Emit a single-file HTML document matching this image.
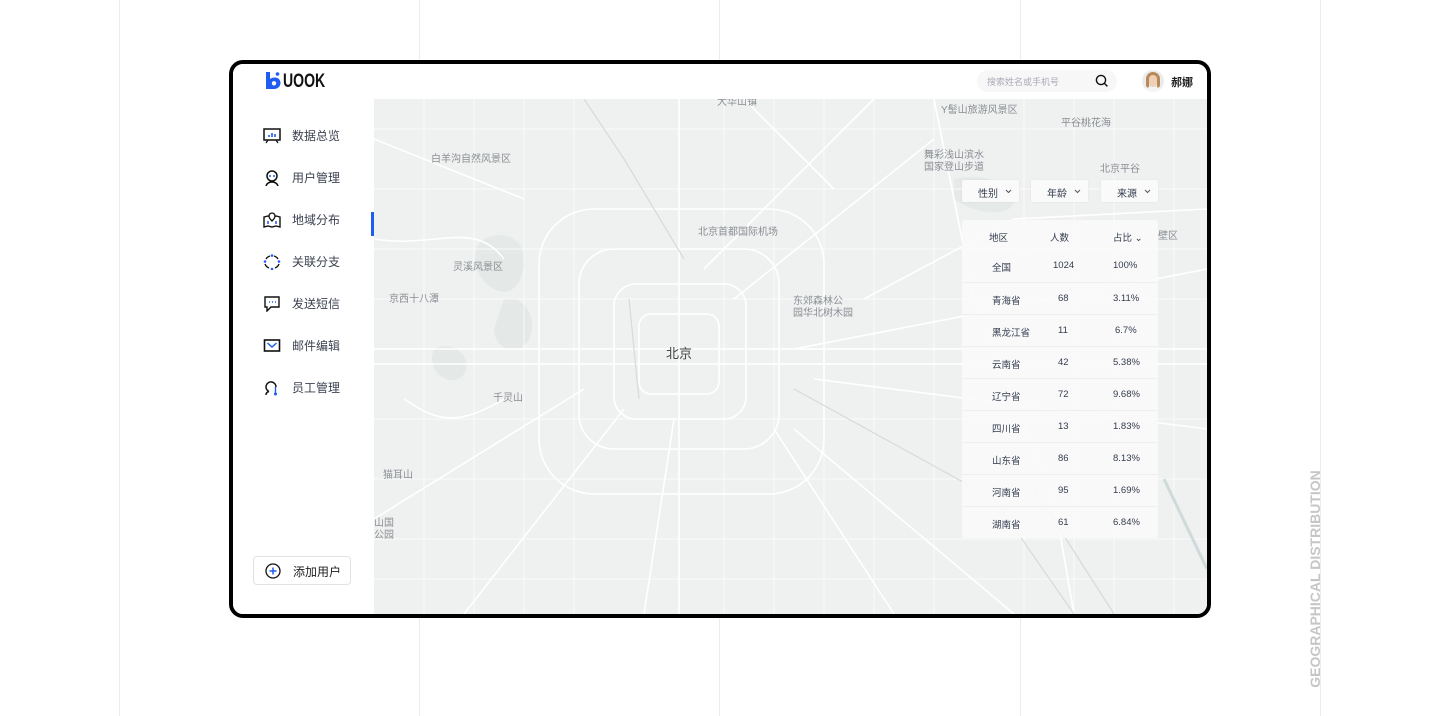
<!DOCTYPE html>
<html><head><meta charset="utf-8">
<style>
*{margin:0;padding:0;box-sizing:border-box}
body{width:1440px;height:716px;background:#fff;position:relative;overflow:hidden;font-family:"Liberation Sans","Noto Sans CJK SC",sans-serif}
.vl{position:absolute;top:0;width:1px;height:716px;background:#ececec}
.frame{position:absolute;left:229px;top:60px;width:982px;height:558px;border:4px solid #000;border-radius:14px;overflow:hidden;background:#fff}
.hdr{position:absolute;left:0;top:0;width:974px;height:35px;background:#fff;z-index:3}
.side{position:absolute;left:0;top:35px;width:141px;height:515px;background:#fff;z-index:2}
.map{position:absolute;left:141px;top:35px;width:833px;height:515px;background:#eff0f0}
.nav{position:absolute;left:30px;font-size:12px;color:#3b4150;display:flex;align-items:center}
.nav svg{margin-right:11px}
.ml{position:absolute;font-size:10px;color:#8a8e93;white-space:nowrap}
.dd{position:absolute;top:81px;width:57px;height:22px;background:#fafafa;border-radius:2px;font-size:10px;color:#333c4e;box-shadow:0 0 2px rgba(0,0,0,.06)}
.dd span{position:absolute;left:16px;top:5px}
.dd svg{position:absolute;right:7px;top:9px}
.tbl{position:absolute;left:588px;top:121px;width:196px;height:318px;background:rgba(250,250,250,.9);border-radius:3px;font-size:9.5px;color:#333c4e}
.row{position:absolute;left:0;width:196px;height:32px;border-top:1px solid rgba(235,235,235,.8)}
.row span{position:absolute;top:10px}
.c1{left:30px}.c2{left:91px}.c3{left:151px}
</style></head><body>
<div class="vl" style="left:119px"></div><div class="vl" style="left:419px"></div><div class="vl" style="left:719px"></div><div class="vl" style="left:1020px"></div><div class="vl" style="left:1320px"></div>
<div style="position:absolute;left:1315px;top:579px;transform:translate(-50%,-50%) rotate(-90deg);font-size:14px;font-weight:bold;color:#c6c6c6;white-space:nowrap">GEOGRAPHICAL DISTRIBUTION</div>

<div class="frame">
 <div class="hdr">
  <svg style="position:absolute;left:32px;top:8px" width="16" height="18" viewBox="0 0 16 18"><path d="M1 0h4v7c1-1 3-1.5 5-1.5 3.5 0 5.5 2.5 5.5 5.5S13 17 9 17H1z" fill="#1e5cf2"/><circle cx="9" cy="11.3" r="2.2" fill="#fff"/><circle cx="12.5" cy="2" r="1.8" fill="#1e5cf2"/></svg>
  <div style="position:absolute;left:50px;top:7px;font-size:19px;font-weight:bold;color:#111;transform:scaleX(.74);transform-origin:left">UOOK</div>
  <div style="position:absolute;left:744px;top:6px;width:140px;height:22px;border-radius:11px;background:#f7f7f7"></div>
  <div style="position:absolute;left:754px;top:11px;font-size:9px;color:#aab">搜索姓名或手机号</div>
  <svg style="position:absolute;left:862px;top:10px" width="14" height="14" viewBox="0 0 14 14"><circle cx="6" cy="6" r="4.6" fill="none" stroke="#111" stroke-width="1.4"/><path d="M9.4 9.4l3 3" stroke="#111" stroke-width="1.4"/></svg>
  <div style="position:absolute;left:909px;top:6px;width:22px;height:22px;border-radius:50%;background:#ececec;overflow:hidden"><div style="position:absolute;left:6px;top:4px;width:10px;height:13px;border-radius:50%;background:#efd0b6"></div><div style="position:absolute;left:4px;top:2px;width:14px;height:16px;border-radius:7px 7px 3px 3px;border:3px solid #b88a5a;border-bottom:none"></div><div style="position:absolute;left:3px;top:17px;width:16px;height:10px;border-radius:8px;background:#f4f4f4"></div></div>
  <div style="position:absolute;left:938px;top:10px;font-size:11px;font-weight:bold;color:#222">郝娜</div>
 </div>
 <div class="side">
  <div class="nav" style="top:28px"><svg width="18" height="16" viewBox="0 0 18 16"><rect x="1" y="1" width="16" height="11" fill="none" stroke="#111" stroke-width="1.5"/><path d="M3 15l2-3M15 15l-2-3" stroke="#111" stroke-width="1.3"/><path d="M6 9V7M9 9V5M12 9V6" stroke="#1e5cf2" stroke-width="1.6"/></svg>数据总览</div>
  <div class="nav" style="top:70px"><svg width="18" height="16" viewBox="0 0 18 16"><circle cx="9" cy="6" r="5" fill="none" stroke="#111" stroke-width="1.5"/><path d="M3 16c1-3 3-4 6-4s5 1 6 4" fill="none" stroke="#111" stroke-width="1.5"/><circle cx="7" cy="6" r="1" fill="#1e5cf2"/><circle cx="11" cy="6" r="1" fill="#1e5cf2"/></svg>用户管理</div>
  <div class="nav" style="top:112px"><svg width="18" height="16" viewBox="0 0 18 16"><path d="M1 5l4-1 4 2 4-2 4 1v10l-4-1-4 1-4-1-4 1z" fill="none" stroke="#111" stroke-width="1.4"/><path d="M9 1a3 3 0 013 3c0 2-3 5-3 5S6 6 6 4a3 3 0 013-3z" fill="#fff" stroke="#111" stroke-width="1.3"/><path d="M5 12v-3M13 12v-3" stroke="#1e5cf2" stroke-width="1.5"/></svg>地域分布</div>
  <div class="nav" style="top:154px"><svg width="18" height="16" viewBox="0 0 18 16"><path d="M3 5a7 7 0 0 1 4-3M11 2a7 7 0 0 1 4 3M16 10a7 7 0 0 1-4 4M6 14a7 7 0 0 1-4-4" fill="none" stroke="#111" stroke-width="1.4"/><circle cx="9" cy="1.5" r="1.3" fill="#1e5cf2"/><circle cx="2" cy="7.5" r="1.3" fill="#1e5cf2"/><circle cx="16" cy="7.5" r="1.3" fill="#1e5cf2"/><circle cx="9" cy="15" r="1.3" fill="#1e5cf2"/></svg>关联分支</div>
  <div class="nav" style="top:196px"><svg width="18" height="16" viewBox="0 0 18 16"><path d="M2 1h14v10H8l-4 4v-4H2z" fill="none" stroke="#111" stroke-width="1.4"/><path d="M6 6h1M9 6h1M12 6h1" stroke="#1e5cf2" stroke-width="1.5"/></svg>发送短信</div>
  <div class="nav" style="top:238px"><svg width="18" height="16" viewBox="0 0 18 16"><rect x="1.5" y="2" width="15" height="11" fill="none" stroke="#111" stroke-width="1.6"/><path d="M4.5 5l4.5 4 4.5-4" fill="none" stroke="#1e5cf2" stroke-width="1.5"/></svg>邮件编辑</div>
  <div class="nav" style="top:280px"><svg width="18" height="16" viewBox="0 0 18 16"><path d="M13 7a5 5 0 1 0-7 4.5M3 15c0-2 1-3 3-3.5" fill="none" stroke="#111" stroke-width="1.5"/><path d="M12.5 7v7" stroke="#1e5cf2" stroke-width="1.4"/><circle cx="12.5" cy="14" r="1.5" fill="#1e5cf2"/></svg>员工管理</div>
  <div style="position:absolute;left:138px;top:113px;width:3px;height:24px;background:#1e5cf2"></div>
  <div style="position:absolute;left:20px;top:457px;width:98px;height:29px;border:1px solid #e2e2e2;border-radius:4px;background:#fff;font-size:12px;color:#222"><svg style="position:absolute;left:11px;top:6px" width="16" height="16" viewBox="0 0 16 16"><circle cx="8" cy="8" r="7" fill="none" stroke="#111" stroke-width="1.3"/><path d="M8 4.5v7M4.5 8h7" stroke="#1e5cf2" stroke-width="1.5"/></svg><span style="position:absolute;left:39px;top:6px">添加用户</span></div>
 </div>
 <div class="map">
  <svg width="833" height="515" style="position:absolute;left:0;top:0" fill="none">
   <g fill="#e2e7e6" opacity=".8"><path d="M110 140c20-10 40 0 40 20s-10 40-30 30-25-40-10-50z"/><path d="M130 200c20-5 35 20 25 40s-35 10-35-10z"/><path d="M60 250c20-10 40 10 30 25s-40 0-30-25z"/><path d="M580 80c20-5 60 0 60 20s-40 15-60 0z"/></g>
   <g stroke="#fafafa" stroke-width="1">
    <path d="M0 320h833M0 200h833M0 380h833M0 440h833M100 0v515M200 0v515M400 0v515M500 0v515M560 0v515M650 0v515M740 0v515M0 90h833M0 480h833M0 30h833M0 150h833M50 0v515M150 0v515M350 0v515M450 0v515M700 0v515M800 0v515"/>
   </g>
   <g stroke="#fff" stroke-width="1.6">
    <rect x="265" y="215" width="80" height="80" rx="12"/>
    <rect x="240" y="185" width="132" height="135" rx="22"/>
    <rect x="205" y="150" width="200" height="200" rx="35"/>
    <rect x="165" y="110" width="285" height="285" rx="55"/>
    <path d="M0 250H833M0 265H833M305 0V515"/>
    <path d="M330 170L500 0M360 200L560 40M420 330L640 515M250 310L90 515M210 290L0 420M420 250L833 170M440 280L833 330M400 330L520 515M300 320L270 515M150 100L0 40M490 200L640 120 833 110M460 90L370 0M560 0L600 200 680 400 700 515M0 140C60 150 100 120 130 160M30 300C60 320 80 330 130 300"/>
   </g>
   <g stroke="#d6dadb" stroke-width="1.2"><path d="M210 0L250 60 310 160M255 200L265 300M420 290L620 400 700 515M660 390L740 515"/></g>
   <path d="M790 380L833 470" stroke="#cfdada" stroke-width="3"/>
  </svg>
  <div class="ml" style="left:57px;top:51px">白羊沟自然风景区</div>
  <div class="ml" style="left:79px;top:159px">灵溪风景区</div>
  <div class="ml" style="left:15px;top:191px">京西十八潭</div>
  <div class="ml" style="left:324px;top:124px">北京首都国际机场</div>
  <div class="ml" style="left:419px;top:197px;line-height:12px">东郊森林公<br>园华北树木园</div>
  <div class="ml" style="left:292px;top:244px;font-size:13px;color:#444">北京</div>
  <div class="ml" style="left:119px;top:290px">千灵山</div>
  <div class="ml" style="left:9px;top:367px">猫耳山</div>
  <div class="ml" style="left:0px;top:419px;line-height:12px">山国<br>公园</div>
  <div class="ml" style="left:567px;top:2px">Y髻山旅游风景区</div>
  <div class="ml" style="left:687px;top:15px">平谷桃花海</div>
  <div class="ml" style="left:550px;top:51px;line-height:12px">舞彩浅山滨水<br>国家登山步道</div>
  <div class="ml" style="left:726px;top:61px">北京平谷</div>
  <div class="ml" style="left:784px;top:128px">壁区</div>
  <div class="ml" style="left:343px;top:-6px">大华山镇</div>
  <div class="dd" style="left:588px"><span>性别</span><svg width="7" height="5" viewBox="0 0 7 5"><path d="M1 1l2.5 2.5L6 1" stroke="#556" fill="none"/></svg></div>
  <div class="dd" style="left:657px"><span>年龄</span><svg width="7" height="5" viewBox="0 0 7 5"><path d="M1 1l2.5 2.5L6 1" stroke="#556" fill="none"/></svg></div>
  <div class="dd" style="left:727px"><span>来源</span><svg width="7" height="5" viewBox="0 0 7 5"><path d="M1 1l2.5 2.5L6 1" stroke="#556" fill="none"/></svg></div>
  <div class="tbl">
   <div class="row" style="top:0;border:none"><span class="c1" style="left:27px">地区</span><span class="c2" style="left:88px">人数</span><span class="c3" style="left:151px">占比 ⌄</span></div>
   <div class="row" style="top:30px;border:none"><span class="c1">全国</span><span class="c2">1024</span><span class="c3">100%</span></div>
   <div class="row" style="top:62px"><span class="c1">青海省</span><span class="c2" style="left:96px">68</span><span class="c3">3.11%</span></div>
   <div class="row" style="top:94px"><span class="c1">黑龙江省</span><span class="c2" style="left:96px">11</span><span class="c3" style="left:153px">6.7%</span></div>
   <div class="row" style="top:126px"><span class="c1">云南省</span><span class="c2" style="left:96px">42</span><span class="c3">5.38%</span></div>
   <div class="row" style="top:158px"><span class="c1">辽宁省</span><span class="c2" style="left:96px">72</span><span class="c3">9.68%</span></div>
   <div class="row" style="top:190px"><span class="c1">四川省</span><span class="c2" style="left:96px">13</span><span class="c3">1.83%</span></div>
   <div class="row" style="top:222px"><span class="c1">山东省</span><span class="c2" style="left:96px">86</span><span class="c3">8.13%</span></div>
   <div class="row" style="top:254px"><span class="c1">河南省</span><span class="c2" style="left:96px">95</span><span class="c3">1.69%</span></div>
   <div class="row" style="top:286px"><span class="c1">湖南省</span><span class="c2" style="left:96px">61</span><span class="c3">6.84%</span></div>
  </div>
 </div>
</div>
</body></html>
